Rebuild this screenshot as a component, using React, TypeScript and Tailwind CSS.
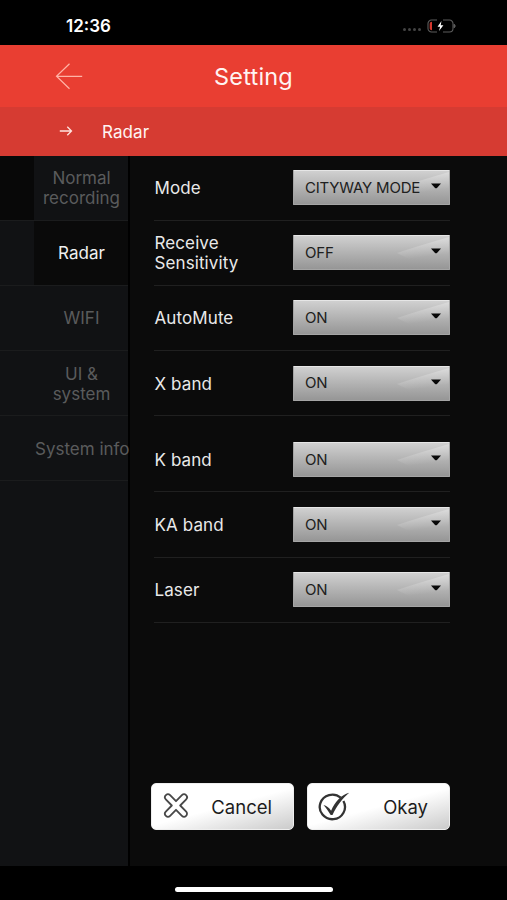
import clsx from "clsx";

interface Setting {
  label: string;
  value: string;
}

const TABS = ["Normal recording", "Radar", "WIFI", "UI & system", "System info"];

const SETTINGS: Setting[] = [
  { label: "Mode", value: "CITYWAY MODE" },
  { label: "Receive Sensitivity", value: "OFF" },
  { label: "AutoMute", value: "ON" },
  { label: "X band", value: "ON" },
];

const BANDS: Setting[] = [
  { label: "K band", value: "ON" },
  { label: "KA band", value: "ON" },
  { label: "Laser", value: "ON" },
];

function StatusBar() {
  return (
    <div className="flex h-[45px] shrink-0 items-center justify-between bg-black pt-[7px] pr-[51px] pl-[66px]">
      <span className="pt-px text-[17px] font-semibold text-white">12:36</span>
      <div className="flex items-center gap-[6px]">
        <div className="flex gap-[2px] pt-[7px]">
          {[0, 1, 2, 3].map((dot) => (
            <span key={dot} className="size-[3px] rounded-full bg-[#444]" />
          ))}
        </div>
        <svg width="29" height="14" viewBox="0 0 29 14" fill="none">
          <path
            d="M10 1H4.5A3.5 3.5 0 0 0 1 4.5V9.5A3.5 3.5 0 0 0 4.5 13H10M16 1h6.5A3.5 3.5 0 0 1 26 4.5V9.5A3.5 3.5 0 0 1 22.5 13H16"
            stroke="#5c5c5c"
            strokeWidth="1.1"
          />
          <path d="M27 5.2a2 2 0 0 1 0 3.6z" fill="#5c5c5c" stroke="#5c5c5c" />
          <path d="M5 2.8v8.4C3.5 11.2 2.7 10.5 2.7 9V5c0-1.5.8-2.2 2.3-2.2z" fill="#d5382e" />
          <path d="M14.5 2 10.5 7.7h2.6L12 12l4.4-5.8h-2.7z" fill="#fff" />
        </svg>
      </div>
    </div>
  );
}

function Header() {
  return (
    <header className="shrink-0 text-[#fff4f2]">
      <div className="grid h-[62px] grid-cols-[1fr_auto_1fr] items-center bg-[#e93e32]">
        <button type="button" aria-label="Back" className="ml-[55px] w-7">
          <svg width="28" height="27" viewBox="0 0 28 27" fill="none" stroke="#ffb3a6" strokeWidth="1.2">
            <path d="M14.5.8 1.5 13.3l13 12.5M1.5 13.3H27.2" />
          </svg>
        </button>
        <h1 className="pt-[2px] text-[23.5px] tracking-[0.2px]">Setting</h1>
      </div>
      <div className="flex h-[48.5px] items-center bg-[#d63b32] pl-[59px]">
        <svg width="14" height="12" viewBox="0 0 14 12" fill="none" stroke="#ffe3de" strokeWidth="1.3">
          <path d="M.8 6h11.6M8.3 1.8 12.5 6l-4.2 4.2" />
        </svg>
        <span className="ml-[29px] pt-[2px] text-[17px] tracking-[0.1px]">Radar</span>
      </div>
    </header>
  );
}

function Sidebar() {
  return (
    <nav className="w-[130px] shrink-0 border-r-2 border-black bg-[#111214]">
      {TABS.map((tab, i) => {
        const active = tab === "Radar";
        return (
          <div key={tab} className="flex h-[65.2px] border-b border-[#1b1c1d]">
            <div className={clsx("w-[34px] shrink-0", i === 0 && "bg-[#080808]")} />
            <div
              className={clsx(
                "flex flex-1 items-center justify-center pt-px pl-px text-center text-[17px] leading-5",
                active ? "bg-[#0a0a0a] text-[#f0f0f0]" : "text-[#5a5b5c]",
                tab === "System info" && "whitespace-nowrap",
              )}
            >
              <span className={clsx(tab === "UI & system" && "w-16")}>{tab}</span>
            </div>
          </div>
        );
      })}
    </nav>
  );
}

function Select({ value }: { value: string }) {
  return (
    <button
      type="button"
      className="relative flex h-[35px] w-[157px] shrink-0 items-center justify-between overflow-hidden rounded-[1px] border border-[#a5a5a5] border-t-[#e6e6e6] bg-linear-to-b from-[#d0d0d0] to-[#969696] pr-[8px] pl-[11px] text-[#202020]"
    >
      <svg className="absolute top-0 right-0" width="56" height="32" viewBox="0 0 56 32">
        <defs>
          <linearGradient id="shine" x1="0.1" y1="0" x2="0.35" y2="1">
            <stop offset="0.2" stopColor="#fff" stopOpacity="0.28" />
            <stop offset="0.75" stopColor="#fff" stopOpacity="0" />
          </linearGradient>
        </defs>
        <path d="M4 17C20 12 38 6 56 1V30H30z" fill="url(#shine)" />
      </svg>
      <span className="relative pt-px text-[15px] tracking-[-0.2px] whitespace-nowrap">{value}</span>
      <svg className="relative -mt-[3px]" width="10" height="6" viewBox="0 0 10 6">
        <path d="M0 .5h10L6.2 4.7Q5 5.9 3.8 4.7z" fill="#080808" />
      </svg>
    </button>
  );
}

function SettingRow({ label, value }: Setting) {
  return (
    <div className="flex h-[65.2px] items-center justify-between border-b border-[#202020]">
      <span className="w-24 pt-px pl-[0.5px] text-[17px] leading-5 tracking-[0.1px] text-[#e9e9e9]">{label}</span>
      <Select value={value} />
    </div>
  );
}

function CancelIcon() {
  return (
    <svg className="-mt-[2px]" width="26" height="25" viewBox="0 0 26 25" fill="none" stroke="#484848" strokeWidth="1.8" strokeLinejoin="round">
      <path d="M13 8.2 18.9 2.2a2.9 2.9 0 0 1 4.3 4.1L17.2 12.5l6 6.2a2.9 2.9 0 0 1-4.3 4.1L13 16.8 7.1 22.8a2.9 2.9 0 0 1-4.3-4.1l6-6.2-6-6.2a2.9 2.9 0 0 1 4.3-4.1z" />
    </svg>
  );
}

function OkayIcon() {
  return (
    <svg className="-mt-px" width="33" height="29" viewBox="0 0 33 29" fill="none">
      <path d="M23.7 5.7A12.6 12.3 0 1 0 26.4 9" stroke="#333" strokeWidth="2.3" />
      <path d="M6.5 13c3 .7 5.5 2.6 7.6 5.7C18 10 24 3 32.2.8 25.5 6.5 20 13.5 15.5 23h-1.8C11.5 19.500 9.500 16.300 6.500 13z" fill="#333" />
    </svg>
  );
}

function Actions() {
  const button =
    "flex h-[47px] w-[143px] items-center justify-between rounded-[5px] border border-[#eee] bg-linear-165 from-white from-50% to-[#cbcbcb] pr-[21px] text-[18.5px] text-[#1c1c1c]";
  return (
    <div className="mt-auto mb-[36px] -ml-[3px] flex gap-[13px]">
      <button type="button" className={clsx(button, "pl-[11px]")}>
        <CancelIcon />
        <span className="pt-[2px]">Cancel</span>
      </button>
      <button type="button" className={clsx(button, "pl-[9px]")}>
        <OkayIcon />
        <span className="pt-[2px]">Okay</span>
      </button>
    </div>
  );
}

export default function App() {
  return (
    <div className="flex h-[900px] w-[507px] flex-col overflow-hidden bg-black font-['Inter','Liberation_Sans',sans-serif]">
      <StatusBar />
      <Header />
      <div className="flex h-[710.5px] shrink-0 bg-[#0b0b0b]">
        <Sidebar />
        <main className="ml-[24px] flex w-[296px] flex-col">
          {SETTINGS.map((setting) => (
            <SettingRow key={setting.label} {...setting} />
          ))}
          <div className="h-[11px]" />
          {BANDS.map((setting) => (
            <SettingRow key={setting.label} {...setting} />
          ))}
          <Actions />
        </main>
      </div>
      <div className="flex flex-1 justify-center pt-[21px]">
        <div className="h-[5px] w-[158px] rounded-full bg-white" />
      </div>
    </div>
  );
}
